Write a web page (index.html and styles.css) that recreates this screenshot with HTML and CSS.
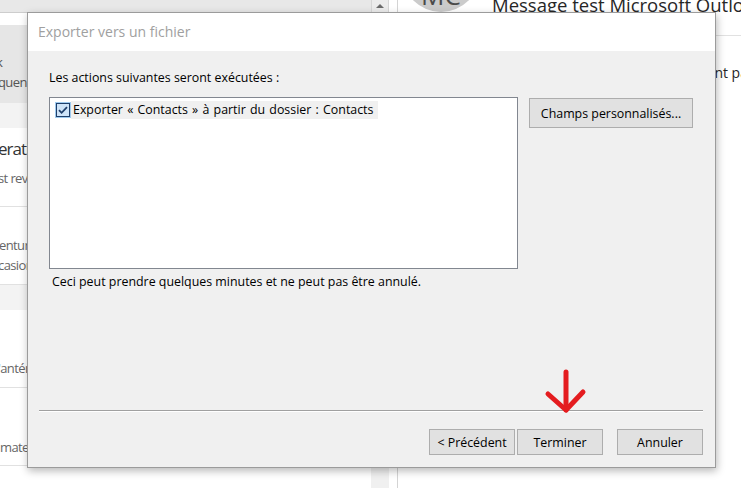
FILE: index.html
```html
<!DOCTYPE html>
<html lang="fr">
<head>
<meta charset="utf-8">
<title>Exporter vers un fichier</title>
<link rel="stylesheet" href="styles.css">
</head>
<body>
<div class="outlook">
  <div class="list-pane">
    <div class="list-top"></div>
    <div class="list-gap"></div>
    <div class="item item-selected">
      <div class="line l-k">k</div>
      <div class="line l-sub">quence</div>
    </div>
    <div class="group-band"></div>
    <div class="item item-2">
      <div class="line l-big">eration</div>
      <div class="line l-sub2">st revue</div>
    </div>
    <div class="item item-3">
      <div class="line l-a">enture</div>
      <div class="line l-b">casion</div>
    </div>
    <div class="group-band"></div>
    <div class="item item-4">
      <div class="line l-c">'antérieur</div>
    </div>
    <div class="item item-5">
      <div class="line l-d">mateur</div>
    </div>
  </div>
  <div class="scrollbar">
    <div class="scroll-up"><span class="tri"></span></div>
  </div>
  <div class="splitter"></div>
  <div class="reading-pane">
    <div class="msg-header">
      <div class="avatar"><span>MC</span></div>
      <div class="msg-title">Message test Microsoft Outlook</div>
    </div>
    <p class="msg-body">Ce message a été envoyé automatiquement par Microsoft Outlook lors du test.</p>
  </div>
</div>

<div class="dialog">
  <div class="dlg-title">Exporter vers un fichier</div>
  <div class="dlg-body">
    <div class="dlg-content">
      <p class="lead">Les actions suivantes seront exécutées :</p>
      <div class="dlg-row">
        <div class="listbox">
          <div class="list-item">
            <span class="chk">
              <svg width="16" height="16" viewBox="0 0 16 16">
                <rect x="0" y="0" width="16" height="16" fill="#9fcaee"/>
                <rect x="1.5" y="1.5" width="13" height="13" fill="#cfe4f8" stroke="#1f3f6a" stroke-width="1"/>
                <path d="M4 8.2 L6.6 10.8 L12 5.2" fill="none" stroke="#1f3f6a" stroke-width="1.8"/>
              </svg>
            </span>
            <span class="item-text">Exporter « Contacts » à partir du dossier : Contacts</span>
          </div>
        </div>
        <button class="btn btn-fields">Champs personnalisés...</button>
      </div>
      <p class="note">Ceci peut prendre quelques minutes et ne peut pas être annulé.</p>
    </div>
    <div class="dlg-footer">
      <div class="sep"></div>
      <div class="btn-row">
        <button class="btn">&lt; Précédent</button>
        <button class="btn">Terminer</button>
        <button class="btn btn-cancel">Annuler</button>
      </div>
    </div>
  </div>
</div>

<svg class="annot-arrow" width="48" height="50" viewBox="0 0 48 50">
  <path d="M22 4 L22 42" fill="none" stroke="#e41c1f" stroke-width="5" stroke-linecap="round"/>
  <path d="M4 26 L22 42 L39 24" fill="none" stroke="#e41c1f" stroke-width="5" stroke-linecap="round" stroke-linejoin="round"/>
</svg>
</body>
</html>
```

FILE: styles.css
```css
* { box-sizing: border-box; }
html, body { margin: 0; padding: 0; }
body {
  width: 741px;
  height: 488px;
  overflow: hidden;
  position: relative;
  background: #fff;
  font-family: "Open Sans", "Noto Sans", sans-serif;
  color: #000;
}

/* Outlook background */
.outlook { display: flex; height: 488px; }
.list-pane { width: 371px; flex: none; overflow: hidden; }
.list-top { height: 13px; background: #e8e8e8; border-bottom: 1px solid #cdcdcd; }
.list-gap { height: 12px; }
.item {
  border-bottom: 1px solid #e1e1e1;
  white-space: nowrap;
  color: #666;
  font-size: 13px;
  letter-spacing: -0.6px;
}
.line { line-height: 20px; height: 20px; }
.item-selected { height: 78px; background: #e6e6e6; border-bottom: none; padding-top: 27px; color: #555; }
.l-k { margin-left: -4px; }
.l-sub { margin-left: -2px; }
.group-band { height: 25px; background: #f3f3f3; }
.item-2 { height: 79px; padding-top: 8px; }
.l-big { font-size: 17px; color: #333; height: 26px; line-height: 26px; margin-left: -2px; letter-spacing: -1px; }
.l-sub2 { margin-top: 6px; margin-left: -2px; }
.item-3 { height: 78px; padding-top: 28px; }
.l-a { margin-left: -1px; }
.l-b { margin-left: -2px; }
.item-4 { height: 78px; padding-top: 48px; }
.l-c { margin-left: -2px; }
.item-5 { height: 78px; padding-top: 49px; }

.scrollbar { width: 18px; flex: none; background: #f0f0f0; }
.scroll-up {
  height: 13px;
  border-left: 1px solid #d6d6d6;
  border-right: 1px solid #d6d6d6;
  border-bottom: 1px solid #cdcdcd;
  background: #ececec;
  display: flex;
  justify-content: center;
  padding-top: 4px;
}
.tri {
  width: 0; height: 0;
  border-left: 4px solid transparent;
  border-right: 4px solid transparent;
  border-bottom: 4px solid #6b6b6b;
}
.splitter { width: 8px; flex: none; }
.reading-pane { flex: 1; border-left: 1px solid #d4d4d4; overflow: hidden; }
.msg-header { display: flex; align-items: flex-start; margin-top: -66px; padding-left: 4px; }
.avatar {
  width: 78px; height: 78px; flex: none;
  border-radius: 50%;
  background: #cbcbcb;
  display: flex; align-items: flex-end; justify-content: center;
  padding-bottom: 4px;
}
.avatar span { font-size: 26px; line-height: 26px; color: #4a4a4a; }
.msg-title {
  margin-left: 12px;
  margin-top: 58px;
  font-size: 18.5px;
  line-height: 26px;
  color: #262626;
  white-space: nowrap;
  padding-bottom: 17px;
  border-bottom: 1px solid #e1e1e1;
  width: 400px;
}
.msg-body {
  margin: 27px 0 0 44px;
  font-size: 14px;
  line-height: 20px;
  color: #262626;
  white-space: nowrap;
}

/* Dialog */
.dialog {
  position: absolute;
  left: 27px;
  top: 12px;
  width: 689px;
  height: 456px;
  border: 1px solid #9b9b9b;
  background: #f0f0f0;
  box-shadow: 1px 3px 8px rgba(0, 0, 0, 0.28);
  display: flex;
  flex-direction: column;
  font-size: 12.4px;
}
.dlg-title {
  height: 38px;
  background: #fff;
  color: #a0a0a0;
  font-size: 14px;
  line-height: 38px;
  padding-left: 10px;
}
.dlg-body { flex: 1; display: flex; flex-direction: column; }
.dlg-content { flex: 1; padding: 19px 0 0 21px; }
.lead { margin: 0; line-height: 16px; }
.dlg-row { display: flex; align-items: flex-start; gap: 11px; margin-top: 11px; }
.listbox {
  width: 469px;
  height: 172px;
  background: #fff;
  border: 1px solid #828790;
  padding: 3px 0 0 5px;
}
.list-item { display: flex; align-items: center; height: 18px; }
.chk { width: 16px; height: 16px; display: block; }
.chk svg { display: block; }
.item-text {
  background: #f0f0f0;
  line-height: 18px;
  padding: 0 5px 0 2px;
  word-spacing: 1px;
}
.btn {
  font-family: inherit;
  font-size: 12.4px;
  color: #000;
  background: #e1e1e1;
  border: 1px solid #adadad;
  border-radius: 0;
  padding: 0;
  margin: 0;
  height: 26px;
  width: 86px;
}
.btn-fields { width: 164px; height: 30px; margin-top: 1px; }
.note { margin: 5px 0 0 3px; line-height: 16px; }
.dlg-footer { padding: 0 12px 12px 11px; }
.sep { height: 2px; border-top: 1px solid #a0a0a0; border-bottom: 1px solid #fff; }
.btn-row { display: flex; justify-content: flex-end; gap: 2px; margin-top: 17px; }
.btn-cancel { margin-left: 12px; }

.annot-arrow { position: absolute; left: 544px; top: 368px; }
```
